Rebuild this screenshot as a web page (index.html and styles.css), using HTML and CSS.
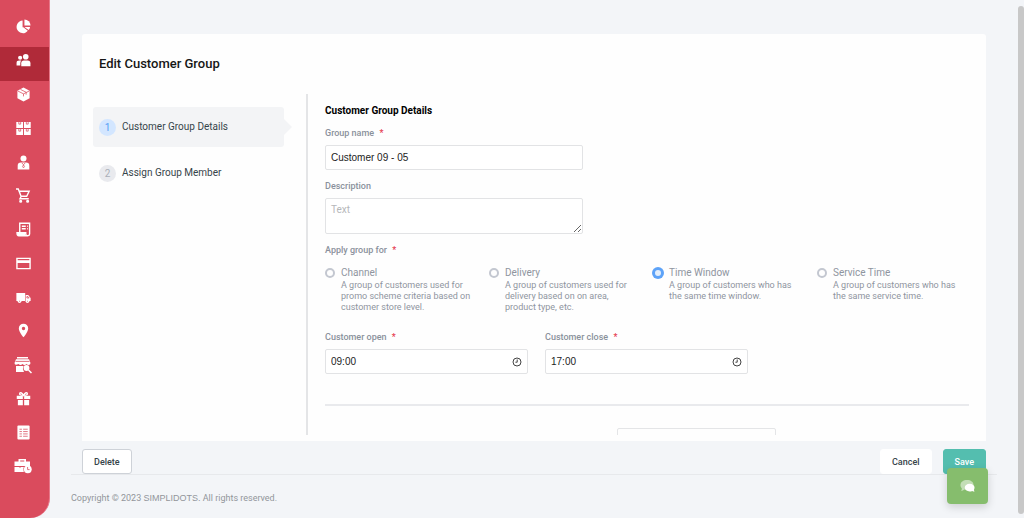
FILE: index.html
```html
<!DOCTYPE html>
<html lang="en">
<head>
<meta charset="utf-8">
<title>Edit Customer Group</title>
<link rel="stylesheet" href="styles.css">
</head>
<body>
<nav class="sidebar" aria-label="Main">
  <a href="#" aria-label="Dashboard"><svg viewBox="0 0 16 16"><path d="M7 1.700A6.700 6.700 0 1 0 12.600 12.500L7.800 8.800H7z"/><path d="M9 .5a6.500 6.500 0 0 1 6.500 6.500H9z"/><path d="M9 8.400h6a6.500 6.500 0 0 1-1.500 3.300z"/></svg></a>
  <a href="#" class="active" aria-label="Customers"><svg viewBox="0 0 16 16"><circle cx="10.400" cy="4" r="3"/><circle cx="4.400" cy="5" r="2.200"/><path d="M5.600 14v-3.200Q5.600 8 8.400 8h4Q15.400 8 15.400 10.800V14z"/><path d="M.6 13.400v-2.800Q.6 8 3.400 8h2.200Q4.600 9.200 4.600 10.800v2.600z"/></svg></a>
  <a href="#" aria-label="Products"><svg viewBox="0 0 16 16"><path d="M8 .5 14.500 4v8L8 15.500 1.500 12V4z"/><path class="cut" d="m2 4.300 6 3 6-3M8 7.300V10M4.800 2.600l6 3v2.600"/></svg></a>
  <a href="#" aria-label="Inventory"><svg viewBox="0 0 16 16"><path d="M.3 1h7.200v6.500H.3zM8.500 1h7.200v6.500H8.500zM.3 8.500h7.200V15H.3zM8.500 8.500h7.200V15H8.500z"/><path class="cut" d="M3 1v2.300h2V1M11 1v2.300h2V1M3 8.500v2.300h2V8.500M11 8.500v2.300h2V8.500"/></svg></a>
  <a href="#" aria-label="Staff"><svg viewBox="0 0 16 16"><circle cx="8" cy="3.600" r="3.200"/><path d="M1.800 15.500v-4Q1.800 8 5.200 8h5.600q3.400 0 3.400 3.500v4z"/><path class="cut" d="m6.200 8.400 1.800 2 1.800-2M8 10.500l-1 2 1 1.200 1-1.200z"/></svg></a>
  <a href="#" aria-label="Orders"><svg class="line" viewBox="0 0 16 16"><path d="M0 1h2.400l3 7.800h6l2.600-5.300H3.600M5.600 8.800 4.200 11.500h9.400"/><circle cx="5" cy="14.200" r=".9"/><circle cx="12.400" cy="14.200" r=".9"/></svg></a>
  <a href="#" aria-label="Invoices"><svg class="line" viewBox="0 0 16 16"><path d="M4 11V1.300h10.500v11.500q0 1.900-1.900 1.900H3q-1.900 0-1.900-3.300h9.300v1.400q0 1.700 2 1.700M6.200 4.500h4.200M6.200 7.200h4.200M12 4.500h.8M12 7.200h.8"/><path class="thick" d="M2 13h8"/></svg></a>
  <a href="#" aria-label="Payments"><svg class="line" viewBox="0 0 16 16"><path d="M1 2.500h14v11H1z"/><path class="thick" d="M1 6h14"/></svg></a>
  <a href="#" aria-label="Shipping"><svg viewBox="0 0 16 16"><path d="M.4 3.200h9.400v8.500H.4zM10.400 5.400h2.600l2.600 3.200v3.100h-5.200z"/><circle cx="3.800" cy="12" r="1.900"/><circle cx="12.200" cy="12" r="1.900"/><path class="cut" d="M11.600 7h1.200l1.200 1.500h-2.400zM3.300 12h1M11.700 12h1"/></svg></a>
  <a href="#" aria-label="Locations"><svg viewBox="0 0 16 16"><path fill-rule="evenodd" d="M8 .8a5 5 0 0 0-5 5C3 9.500 8 15.200 8 15.200s5-5.700 5-9.400a5 5 0 0 0-5-5zM8 4a1.800 1.800 0 1 1 0 3.600A1.800 1.800 0 0 1 8 4z"/></svg></a>
  <a href="#" aria-label="Store search"><svg class="wide" viewBox="0 0 18 18"><path d="M3 1h11v1.500H3zM2 3.200h13L16.500 7q0 2-2 2-1 0-2-1-2 2-4 0-2 2-4 0-4 2-4-1z"/><path d="M2 10h7.500q-1.500 3 .5 6H2z"/><circle cx="12.500" cy="12" r="2.900"/><path class="line" d="m14.500 14 3 3"/><path class="cut" d="M1.500 5.400h14"/></svg></a>
  <a href="#" aria-label="Promotions"><svg viewBox="0 0 16 16"><path d="M.8 5h6.500v3.500H.8zM8.700 5h6.500v3.500H8.700zM2 9.600h5.300v5.600H2zM8.700 9.600H14v5.600H8.700z"/><path class="line" d="M8 4.700Q3.200 4.500 4 2.300 5.400.5 8 4.700q2.600-4.200 4-2.400.8 2.200-4 2.400"/></svg></a>
  <a href="#" aria-label="Reports"><svg viewBox="0 0 16 16"><rect x="1.500" y=".5" width="13" height="15" rx="1"/><path class="cut" d="M3.700 4.500h2.600M7.600 4.500h4.900M3.700 7h2.600M7.600 7h4.900M3.700 9.500h2.600M7.600 9.500h4.900M3.700 12h2.600M7.600 12h4.900"/></svg></a>
  <a href="#" aria-label="Work schedule"><svg class="wide" viewBox="0 0 18 18"><path fill-rule="evenodd" d="M4.500 4.500V2h7.500v2.500h4V9H.5V4.500zm1.700 0h4.100v-1H6.200z"/><path d="M.5 10h9.300q-1 2 0 5H.5z"/><circle cx="13.800" cy="12.300" r="3.900"/><path class="cut" d="M13.600 10v2.600h2M6 9v2"/></svg></a>
</nav>

<div class="page">
  <main>
    <section class="card">
      <h1>Edit Customer Group</h1>
      <div class="columns">
        <ol class="steps">
          <li><a href="#" class="step current"><span class="num">1</span>Customer Group Details</a></li>
          <li><a href="#" class="step"><span class="num">2</span>Assign Group Member</a></li>
        </ol>
        <form class="details" id="group-form">
          <h2>Customer Group Details</h2>
          <div class="field text-field">
            <label for="name">Group name <span class="req">*</span></label>
            <input class="control" id="name" type="text" value="Customer 09 - 05">
          </div>
          <div class="field text-field">
            <label for="desc">Description</label>
            <textarea class="control" id="desc" placeholder="Text"></textarea>
          </div>
          <fieldset>
            <legend>Apply group for <span class="req">*</span></legend>
            <div class="options">
              <label class="option"><input type="radio" name="apply"><span class="option-text"><span class="option-name">Channel</span><span class="option-note">A group of customers used for promo scheme criteria based on customer store level.</span></span></label>
              <label class="option"><input type="radio" name="apply"><span class="option-text"><span class="option-name">Delivery</span><span class="option-note">A group of customers used for delivery based on on area, product type, etc.</span></span></label>
              <label class="option"><input type="radio" name="apply" checked><span class="option-text"><span class="option-name">Time Window</span><span class="option-note">A group of customers who has the same time window.</span></span></label>
              <label class="option"><input type="radio" name="apply"><span class="option-text"><span class="option-name">Service Time</span><span class="option-note">A group of customers who has the same service time.</span></span></label>
            </div>
          </fieldset>
          <div class="times">
            <div class="field">
              <label for="open">Customer open <span class="req">*</span></label>
              <div class="control time"><input id="open" type="text" value="09:00"><button type="button" aria-label="Pick opening time"><svg viewBox="0 0 10 10"><circle cx="5" cy="5" r="4"/><path d="M5.200 2.500v2.700H3.400"/></svg></button></div>
            </div>
            <div class="field">
              <label for="close">Customer close <span class="req">*</span></label>
              <div class="control time"><input id="close" type="text" value="17:00"><button type="button" aria-label="Pick closing time"><svg viewBox="0 0 10 10"><circle cx="5" cy="5" r="4"/><path d="M5.200 2.500v2.700H3.400"/></svg></button></div>
            </div>
          </div>
          <hr>
          <div class="next-panel"></div>
        </form>
      </div>
    </section>
    <div class="actions">
      <button type="button" class="btn delete">Delete</button>
      <button type="button" class="btn cancel">Cancel</button>
      <button type="submit" form="group-form" class="btn save">Save</button>
    </div>
  </main>
  <footer>Copyright © 2023 <span class="brand">SIMPLIDOTS.</span> All rights reserved.</footer>
</div>

<button type="button" class="chat" aria-label="Open chat"><svg viewBox="0 0 16 14"><path class="back" d="M7.500.5c4 0 7 2.200 7 5.300s-3 5.400-7 5.400c-1 0-2-.1-2.800-.4-1 .9-2.200 1.300-3.700 1.300.8-.8 1-1.700.9-2.800C.9 8.300.5 7.200.5 5.800.5 2.700 3.500.5 7.500.5z"/><path class="front" d="M10.300 4.500c3 0 5.200 1.800 5.200 4.200 0 .8-.2 1.600-.6 2.200 0 .9.200 1.500.7 2-1.100 0-2-.2-2.600-.7-.8.400-1.700.6-2.700.6-3 0-5.200-1.700-5.200-4.100s2.200-4.200 5.200-4.200z"/></svg></button>
<div class="scrollbar" aria-hidden="true"></div>
</body>
</html>
```

FILE: styles.css
```css
* { box-sizing: border-box; }

body {
  display: flex;
  margin: 0;
  min-height: 100vh;
  overflow: hidden;
  background: #f3f5f8;
  color: #36444a;
  font-family: Roboto, "Liberation Sans", sans-serif;
  font-size: 10px;
}

button, input, textarea { font: inherit; color: inherit; }
a { color: inherit; text-decoration: none; }

.sidebar {
  display: flex;
  flex: none;
  flex-direction: column;
  width: 50px;
  height: 100vh;
  padding: 13px 0 32px;
  border-right: 1px solid #e8788a;
  border-bottom-right-radius: 20px;
  background: #da4b5d;
}

.sidebar a {
  display: flex;
  flex: 1;
  align-items: center;
  justify-content: center;
  padding: 0 3px 6px 0;
}

.sidebar .active { background: #b02a39; }
.sidebar svg { width: 15px; height: 15px; fill: #fff; }
.sidebar svg.wide { width: 18px; height: 18px; }
.sidebar .line { fill: none; stroke: #fff; stroke-width: 1.5; }
.sidebar .thick { stroke-width: 3; }
.sidebar .cut { fill: none; stroke: #da4b5d; stroke-width: 0.8; }

.page {
  flex: 1;
  min-width: 0;
  padding: 34px 27px 0 21px;
}

main {
  padding: 0 11px;
  border-bottom: 1px solid #e7e9ec;
}

.card {
  padding: 0 17px 6px 11px;
  border-radius: 3px 3px 0 0;
  background: #fefefe;
}

h1 {
  margin: 0;
  padding: 20px 6px;
  color: #161616;
  font-size: 13px;
  font-weight: 500;
  line-height: 20px;
}

.columns { display: flex; height: 341px; }

.steps {
  flex: none;
  width: 215px;
  margin: 0;
  padding: 13px 22px 0 0;
  border-right: 2px solid #e4e5e7;
  list-style: none;
}

.step {
  position: relative;
  display: flex;
  align-items: center;
  gap: 6px;
  height: 40px;
  margin-bottom: 6px;
  padding: 0 6px;
  border-radius: 3px;
  line-height: 16px;
}

.current { background: #f3f4f6; }

.current::after {
  content: "";
  position: absolute;
  top: 12px;
  left: 100%;
  border: 8px solid transparent;
  border-right-width: 0;
  border-left-color: #f3f4f6;
}

.num {
  width: 17px;
  border-radius: 50%;
  background: #e9eaee;
  color: #a9afb8;
  line-height: 17px;
  text-align: center;
}

.current .num { background: #d3e6ff; color: #559df5; }

.details {
  flex: 1;
  min-width: 0;
  padding: 10px 0 0 17px;
  overflow: hidden;
}

h2 {
  margin: 0 0 8px;
  color: #000;
  font-size: 10px;
  font-weight: 700;
  line-height: 14px;
}

.field { display: flex; flex-direction: column; }
.text-field { width: 40%; margin-bottom: 9px; }

.field > label, legend {
  padding: 0;
  margin-bottom: 5px;
  color: #8a919c;
  font-size: 9px;
  font-weight: 500;
  line-height: 14px;
}

.req { margin-left: 3px; color: #e5394f; }

.control {
  width: 100%;
  height: 25px;
  padding: 0 5px;
  border: 1px solid #e2e3e5;
  border-radius: 2px;
  outline: 0;
  background: #fff;
  color: #222;
  font-family: "Liberation Sans", Arial, sans-serif;
}

textarea.control {
  height: 36px;
  padding: 5px;
  font-family: Roboto, sans-serif;
  resize: vertical;
}

textarea::placeholder { color: #b5b7ba; }

fieldset { margin: 0; padding: 0; border: 0; }

.options {
  display: grid;
  grid-template-columns: repeat(4, 1fr);
  column-gap: 12px;
  padding-top: 4px;
}

.option { display: flex; gap: 6px; padding-right: 5px; }

.option input {
  flex: none;
  width: 10px;
  height: 10px;
  margin: 2px 0 0;
  border: 2px solid #c3c7d0;
  border-radius: 50%;
  appearance: none;
}

.option input:checked { border-color: #5ea3f8; background: #e3eefb; box-shadow: 0 0 0 1px #5ea3f8; }

.option-text { display: flex; flex-direction: column; color: #8f959f; }
.option-name { font-size: 10px; line-height: 14px; }
.option-note { font-size: 9px; line-height: 11px; }

.times {
  display: flex;
  gap: 17px;
  margin-top: 17px;
}

.times .field { width: 203px; }
.time { display: flex; align-items: center; }

.time input {
  flex: 1;
  min-width: 0;
  padding: 0;
  border: 0;
  outline: 0;
  background: none;
}

.time button {
  display: flex;
  padding: 0;
  border: 0;
  background: none;
}

.time svg { width: 10px; height: 10px; fill: none; stroke: #444; }

hr {
  height: 2px;
  margin: 30px 0 22px;
  border: 0;
  background: #e9eaed;
}

.next-panel {
  width: 159px;
  height: 40px;
  margin: 0 30% 0 auto;
  border: 1px solid #e4e5e7;
  border-radius: 2px;
}

.actions {
  display: flex;
  gap: 11px;
  padding-top: 8px;
}

.btn {
  height: 25px;
  padding: 0 11px;
  border: 1px solid #fff;
  border-radius: 3px;
  background: #fff;
  font-size: 9px;
  font-weight: 500;
}

.delete { margin-right: auto; border-color: #ced2d8; }
.save { border-color: #54beaf; background: #54beaf; color: #fff; }

footer {
  padding-top: 16px;
  color: #92969b;
  font-size: 9px;
  line-height: 14px;
}

.brand { font-family: "Liberation Sans", Arial, sans-serif; }

.chat {
  position: fixed;
  right: 36px;
  bottom: 14px;
  display: grid;
  place-items: center;
  width: 41px;
  height: 36px;
  padding: 0;
  border: 0;
  border-radius: 4px;
  background: #86bd6d;
  box-shadow: 0 3px 9px rgb(0 0 0 / 16%);
}

.chat svg { width: 15px; height: 14px; }
.back { fill: #c3deb7; }
.front { fill: #fff; }

.scrollbar {
  position: fixed;
  top: 6px;
  right: 0;
  bottom: 4px;
  width: 6px;
  border-radius: 3px;
  background: #c8c8c8;
}
```
